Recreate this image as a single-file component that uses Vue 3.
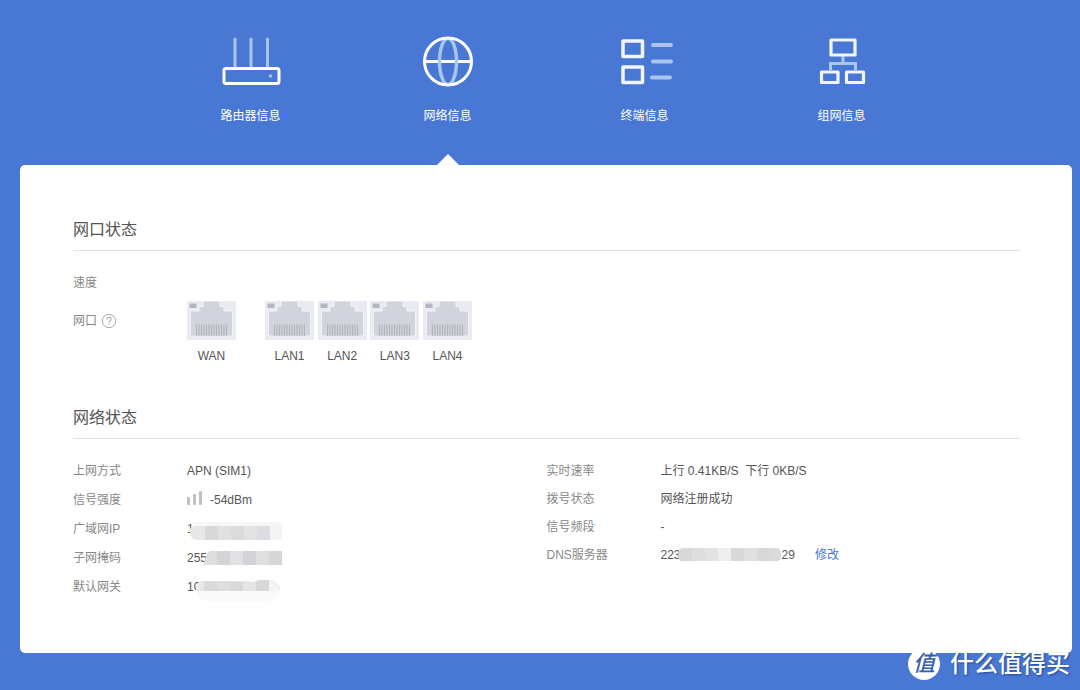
<script setup>
const tabs = [
  { id: 'router', label: '路由器信息' },
  { id: 'network', label: '网络信息' },
  { id: 'devices', label: '终端信息' },
  { id: 'mesh', label: '组网信息' },
]
const active = 'network'

const portGroups = [['WAN'], ['LAN1', 'LAN2', 'LAN3', 'LAN4']]
const pins = Array.from({ length: 13 }, (_, i) => 9 + i * 2.5)

const masks = {
  wan: {
    width: 92,
    height: 18,
    outline: 'M3 0H92V18H7Q2 18 0 12Q-1 6 3 4Z',
    base: '#f6f6f6',
    top: 4,
    bottom: 18,
    cells: [[0, '#e8e8e9'], [15, '#d9d9db'], [28, '#e2e1df'], [41, '#dbdbdc'], [54, '#e4e3e2'], [67, '#dcdde2'], [80, '#f4f4f5']],
  },
  subnet: {
    width: 78,
    height: 14,
    outline: 'M6 0H78V14H0Q2 2 6 0Z',
    base: '#dededf',
    top: 0,
    bottom: 14,
    cells: [[0, '#dededf'], [13, '#d5d3d5'], [26, '#e1e1e3'], [39, '#d4d4d8'], [52, '#dfdfde'], [65, '#d6d6d6']],
  },
  gateway: {
    width: 84,
    height: 21,
    outline: 'M5 1L58 2Q68 -2 76 1Q83 3 84 10Q83 21 72 21H12Q1 20 0 10Q0 4 5 1Z',
    base: '#fafafa',
    top: 0,
    bottom: 11,
    cells: [[0, '#e8e8e8'], [8, '#dadadc'], [21, '#dfdfe0'], [34, '#d9d9db'], [47, '#e6e5e4'], [60, '#d7d7da'], [73, '#f3f4f4']],
  },
  dns: {
    width: 103,
    height: 13,
    outline: 'M4 0H98Q103 1 103 7Q103 13 98 13H2Q-2 4 4 0Z',
    base: '#d8d8d9',
    top: 0,
    bottom: 13,
    cells: [[0, '#d8d8d9'], [14, '#dededf'], [27, '#e3e3e4'], [40, '#efefef'], [53, '#d9d9dc'], [66, '#e0e0e1'], [79, '#d8d8d8'], [92, '#dadada']],
  },
}

const left = [
  { label: '上网方式', value: 'APN (SIM1)' },
  { label: '信号强度', value: '-54dBm', signal: true },
  { label: '广域网IP', value: '1', mask: 'wan' },
  { label: '子网掩码', value: '255', mask: 'subnet' },
  { label: '默认网关', value: '10', mask: 'gateway' },
]
const right = [
  { label: '实时速率', value: '上行 0.41KB/S\u00a0 下行 0KB/S' },
  { label: '拨号状态', value: '网络注册成功' },
  { label: '信号频段', value: '-' },
  { label: 'DNS服务器', value: '223', mask: 'dns', tail: '29', link: '修改' },
]
const columns = [
  { id: 'left', rows: left },
  { id: 'right', rows: right },
]
</script>

<template>
  <div class="page">
    <nav class="tabs">
      <button v-for="t in tabs" :key="t.id" type="button" class="tab" :class="{ active: t.id === active }">
        <svg v-if="t.id === 'router'" class="icon" viewBox="0 0 60 54" fill="none">
          <path d="M14 5V33M30 5V33M46.500 5V33" stroke="#a9c5f0" stroke-width="3" stroke-linecap="round" />
          <rect x="3" y="34.500" width="55" height="15" rx="2" stroke="#fff" stroke-width="3" />
          <circle cx="49.500" cy="42" r="1.800" fill="#a9c5f0" />
        </svg>
        <svg v-else-if="t.id === 'network'" class="icon" viewBox="0 0 60 54" fill="none">
          <path d="M7 27.500H53" stroke="#fff" stroke-width="3" />
          <ellipse cx="30" cy="27.500" rx="8.500" ry="23" stroke="#a9c5f0" stroke-width="3.500" />
          <circle cx="30" cy="27.500" r="23.500" stroke="#fff" stroke-width="3" />
        </svg>
        <svg v-else-if="t.id === 'devices'" class="icon" viewBox="0 0 60 54" fill="none">
          <path d="M38 11H56M38 27.500H56M37 43.500H55" stroke="#a9c5f0" stroke-width="4" stroke-linecap="round" />
          <path d="M8 7H27.500V22.500H8ZM8 33H27.500V48.500H8Z" stroke="#f1f6fe" stroke-width="3.500" stroke-linejoin="round" />
        </svg>
        <svg v-else class="icon" viewBox="0 0 60 54" fill="none">
          <path d="M31 22V29.500M18.500 36V29.500H43.500V36" stroke="#a9c5f0" stroke-width="3" />
          <path d="M19 6H43V21H19ZM9.500 38H26V48.500H9.500ZM34.500 38H51.500V48.500H34.500Z" stroke="#f1f6fe" stroke-width="3.200" stroke-linejoin="round" />
        </svg>
        <span>{{ t.label }}</span>
      </button>
    </nav>

    <main class="card">
      <section class="ports-section">
        <h2>网口状态</h2>
        <div class="row speed"><span class="label">速度</span></div>
        <div class="row ports-row">
          <span class="label port-label">
            网口
            <button type="button" class="help" aria-label="帮助">
              <svg viewBox="0 0 16 16" fill="none" stroke="#aaa">
                <circle cx="8" cy="8" r="6.700" />
                <path d="M5.900 6.400C5.900 3.600 10.100 3.700 10.100 6.200C10.100 7.900 8 7.900 8 9.700M8 10.800V12" stroke-width="1.100" />
              </svg>
            </button>
          </span>
          <div class="ports">
            <div v-for="(g, gi) in portGroups" :key="gi" class="group" :class="{ lan: g.length > 1 }">
              <figure v-for="p in g" :key="p">
                <svg class="port" viewBox="0 0 49 39">
                  <rect width="49" height="39" fill="#e9ebf1" />
                  <path d="M3.500 10H12V5.500H16V0H33V5.500H37V10H45.500V35H3.500Z" fill="#d1d4dc" stroke="#f3f4f8" />
                  <rect x="2.500" y="2.500" width="7" height="4.500" fill="#b4b7c3" />
                  <path v-for="x in pins" :key="x" :d="`M${x + .5} 23.500V35`" stroke="#b4b5ba" stroke-width="1.200" />
                </svg>
                <figcaption>{{ p }}</figcaption>
              </figure>
            </div>
          </div>
        </div>
      </section>

      <section>
        <h2>网络状态</h2>
        <div class="columns">
          <dl v-for="c in columns" :key="c.id" :class="c.id">
            <div v-for="r in c.rows" :key="r.label" class="row">
              <dt class="label">{{ r.label }}</dt>
              <dd>
                <svg v-if="r.signal" class="signal" viewBox="0 0 16 16" fill="#bfbfbf">
                  <rect y="7" width="3" height="8" rx="1" />
                  <rect x="6" y="4" width="3" height="11" rx="1" />
                  <rect x="12" y="1" width="3" height="14" rx="1" />
                </svg>
                <span :class="{ level: r.signal }">{{ r.value }}</span>
                <svg v-if="r.mask" class="mask" :class="r.mask" :width="masks[r.mask].width" :height="masks[r.mask].height">
                  <clipPath :id="`clip-${r.mask}`"><path :d="masks[r.mask].outline" /></clipPath>
                  <g :clip-path="`url(#clip-${r.mask})`">
                    <rect width="100%" height="100%" :fill="masks[r.mask].base" />
                    <rect
                      v-for="cell in masks[r.mask].cells"
                      :key="cell[0]"
                      :x="cell[0]"
                      :y="masks[r.mask].top"
                      :width="masks[r.mask].width - cell[0]"
                      :height="masks[r.mask].bottom - masks[r.mask].top"
                      :fill="cell[1]"
                    />
                  </g>
                </svg>
                <span v-if="r.tail" class="tail">{{ r.tail }}</span>
                <a v-if="r.link" href="#">{{ r.link }}</a>
              </dd>
            </div>
          </dl>
        </div>
      </section>
    </main>

    <div class="watermark">
      <span class="seal">值</span>
      <span>什么值得买</span>
    </div>
  </div>
</template>

<style>
body {
  margin: 0;
}
</style>

<style scoped>
.page {
  position: relative;
  box-sizing: border-box;
  min-height: 100vh;
  padding-bottom: 37px;
  background: #4877d4;
  font: 12px/20px "Liberation Sans", "Noto Sans CJK SC", sans-serif;
  color: #555;
}
.tabs {
  display: grid;
  grid-template-columns: repeat(4, 1fr);
  padding: 0 140px 0 152px;
}
.tab {
  position: relative;
  display: flex;
  flex-direction: column;
  align-items: center;
  gap: 18px;
  height: 165px;
  padding: 34px 0 0;
  border: 0;
  background: none;
  color: #fff;
  font: inherit;
  cursor: pointer;
}
.tab.active::after {
  content: "";
  position: absolute;
  bottom: 0;
  left: 50%;
  margin-left: -11px;
  border: 11px solid transparent;
  border-top: 0;
  border-bottom-color: #fff;
}
.icon {
  width: 60px;
  height: 54px;
}
.card {
  box-sizing: border-box;
  min-height: 488px;
  margin: 0 8px 0 20px;
  padding: 53px 52px 52px 53px;
  border-radius: 5px;
  background: #fff;
}
h2 {
  margin: 0;
  padding-bottom: 8px;
  border-bottom: 1px solid #e2e2e2;
  font-size: 16px;
  font-weight: 400;
  line-height: 24px;
  color: #555;
}
.row {
  display: flex;
}
.label {
  flex: none;
  width: 114px;
  color: #888;
}
.ports-section {
  margin-bottom: 40px;
}
.speed {
  margin-top: 22px;
}
.ports-row {
  margin-top: 8px;
}
.port-label {
  display: flex;
  align-items: center;
  gap: 4px;
  height: 20px;
  margin-top: 10px;
}
.help {
  width: 16px;
  height: 16px;
  padding: 0;
  border: 0;
  background: none;
}
.help svg {
  display: block;
}
.ports {
  display: flex;
  gap: 29px;
}
.group {
  display: flex;
  justify-content: space-between;
}
.lan {
  width: 207px;
}
figure {
  margin: 0;
  text-align: center;
}
.port {
  display: block;
  width: 49px;
  height: 39px;
}
figcaption {
  margin-top: 6px;
}
.columns {
  display: grid;
  grid-template-columns: 1fr 1fr;
  padding-top: 22px;
}
dl {
  display: flex;
  flex-direction: column;
  gap: 9px;
  margin: 0;
}
dl.right {
  gap: 8px;
}
dd {
  position: relative;
  display: flex;
  margin: 0;
}
.signal {
  width: 16px;
  height: 16px;
}
.level {
  margin-left: 7px;
}
.mask {
  position: absolute;
  top: 3px;
  left: 17px;
}
.mask.wan {
  left: 3px;
}
.mask.gateway {
  left: 9px;
}
.tail {
  margin-left: 101px;
}
a {
  margin-left: 20px;
  color: #4877d4;
  text-decoration: none;
}
.watermark {
  position: absolute;
  right: 10px;
  bottom: 10px;
  display: flex;
  align-items: center;
  gap: 10px;
  color: #fff;
  font-size: 24px;
  font-weight: 500;
  line-height: 32px;
  text-shadow: 1px 1px 2px #234890;
}
.seal {
  width: 32px;
  height: 32px;
  border-radius: 50%;
  background: #fff;
  color: #355fae;
  font-size: 22px;
  font-style: italic;
  text-align: center;
  text-shadow: none;
}
</style>
